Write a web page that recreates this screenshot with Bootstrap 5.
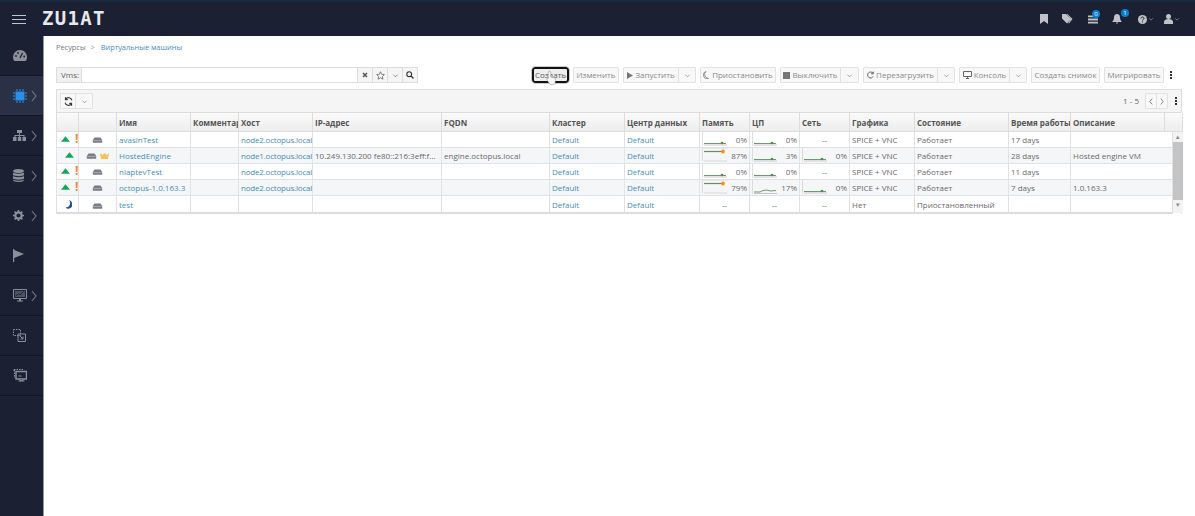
<!DOCTYPE html>
<html lang="ru">

<head>
    <meta charset="UTF-8">
    <meta name="viewport" content="width=device-width, initial-scale=1.0">
    <title>Виртуальные машины</title>
    <link href="https://cdn.jsdelivr.net/npm/bootstrap@5.3.5/dist/css/bootstrap.min.css" rel="stylesheet">
    <style>
        html, body { height: 516px; overflow: hidden; }
        body { font-family: "Open Sans", "Liberation Sans", sans-serif; font-size: 8px; color: #6a6a6a; background: #fff; }
        a { color: #3f8fc0; text-decoration: none; }
        .top-bar { height: 36px; background: #1b2033; border-top: 2px solid #17283f; padding: 0 15px 0 12px; }
        .burger { width: 14px; height: 9px; border-top: 1px solid #c3c5cb; border-bottom: 1px solid #c3c5cb; position: relative; }
        .burger::after { content: ""; display: block; height: 1px; margin-top: 3px; background: #c3c5cb; }
        .brand-name { font-family: "DejaVu Sans Mono", monospace; font-weight: 700; font-size: 19px; line-height: 20px; letter-spacing: 1.3px; color: #e8e9ec; margin: 0 0 2px 16px; }
        .top-ic { color: #c0c2c8; position: relative; display: flex; align-items: center; gap: 1px; }
        .gap-14 { margin-right: 14px; }
        .gap-15 { margin-right: 15px; }
        .gap-16 { margin-right: 16px; }
        .gap-10 { margin-right: 10px; }
        .top-badge { position: absolute; top: -5px; right: -7px; width: 8px; height: 8px; border-radius: 50%; background: #0a7fd0; color: #fff; font-size: 6px; line-height: 8px; text-align: center; }
        .top-badge.task-badge { right: -2px; }
        .caret-mini { width: 6px; height: 6px; color: #8d909a; }
        .shell { height: 480px; }
        .side-rail { width: 44px; flex: none; background: #1b2033; border-right: 1px solid #8f95a3; }
        .rail-item { height: 40px; border-bottom: 1px solid #12162a; color: #8d909a; padding-left: 13px; }
        .rail-item.is-active { background: #2a3146; color: #2a8fe6; }
        .rail-chev { color: #70747f; margin-left: auto; margin-right: 6px; }
        .main-area { padding: 0 13px 0 12px; min-width: 0; }
        .crumbs { height: 31px; padding-top: 6px; line-height: 11px; color: #777; font-size: 7.4px; }
        .crumbs .sep { margin: 0 4px 0 3px; color: #999; }
        .action-row { height: 16px; margin-bottom: 6px; }
        .search-wrap { width: 362px; height: 16px; border: 1px solid #ddd; }
        .search-label { width: 25px; background: #f1f1f1; border-right: 1px solid #ddd; color: #666; padding-left: 4px; line-height: 14px; }
        .search-btn { width: 15px; background: #f5f5f5; border-left: 1px solid #ddd; color: #555; }
        .tb-btn { --bs-btn-padding-x: 2px; --bs-btn-padding-y: 0; --bs-btn-font-size: 8px; --bs-btn-line-height: 14px; --bs-btn-color: #8b8b8b; --bs-btn-bg: #f8f8f8; --bs-btn-border-color: #e2e2e2; --bs-btn-border-radius: 1px; height: 16px; white-space: nowrap; display: inline-flex; align-items: center; gap: 2px; justify-content: center; }
        .tb-btn svg { flex: none; }
        .tb-caret { width: 18px; padding: 0; color: #999; }
        .tb-create { --bs-btn-color: #555; --bs-btn-bg: #eee; --bs-btn-border-color: #111; border-width: 2px; border-radius: 3px; width: 37px; padding: 0; outline: 1px solid #ccc; }
        .kebab { width: 2px; height: 8px; color: #333; flex: none; }
        .hand-cursor { position: absolute; left: 14px; top: 3px; width: 10px; height: 15px; }
        .action-btns { position: relative; }
        .grid-box { border: 1px solid #ddd; border-bottom: 0; }
        .grid-tools { height: 23px; background: #f5f5f5; border-bottom: 1px solid #ddd; padding: 0 3px; }
        .grid-tools .tb-btn { --bs-btn-color: #555; height: 16px; }
        .pager-num { color: #666; margin-right: 6px; }
        .vm-table { table-layout: fixed; width: 1126px; border-collapse: collapse; margin: 0 0 0 -1px; font-size: 8px; color: #6a6a6a; }
        .vm-table th { height: 18px; padding: 3px 2px 0; font-weight: 700; color: #555; background: linear-gradient(#fafafa, #ededed); border: 1px solid #ddd; border-top: 0; white-space: nowrap; overflow: hidden; vertical-align: middle; }
        .vm-table td { height: 16px; padding: 0 2px; line-height: 13px; background: #fff; border: 1px solid #e0e0e0; white-space: nowrap; overflow: hidden; text-overflow: ellipsis; vertical-align: middle; color: #6a6a6a; }
        .vm-table tbody tr:nth-child(even) td { background: #f5f6f7; border-color: #dfe4ea; }
        .vm-table tbody tr:last-child td { height: 18px; padding-top: 1px; border-bottom: 2px solid #ddd; }
        .vm-table .scroll-cell { padding: 0; background: #f3f3f3; border: 0; vertical-align: top; }
        .vm-table .state-cell { padding: 0 0 0 4px; }
        .vm-table .host-cell { padding: 0 0 0 2px; text-overflow: clip; letter-spacing: -.2px; }
        .scroll-arrow { height: 10px; color: #8a8a8a; font-size: 6px; line-height: 10px; text-align: center; }
        .scroll-thumb { height: 58px; background: #c4c4c4; }
        .usage-cell { display: flex; align-items: center; justify-content: space-between; }
        .st-up { color: #1aa45a; flex: none; }
        .st-warn { color: #f0862a; font-weight: 700; font-size: 12px; line-height: 12px; }
        .ic-muted { color: #777; }
        .cell-center { text-align: center; }
        .spark-w { width: 27px; height: 14px; flex: none; }
        .state-gap { gap: 5px; }
    </style>
</head>

<body>
    <svg width="0" height="0" class="d-block">
        <symbol id="vm-ic" viewBox="0 0 12 7"><path d="M2.5 0.5h7L11.5 3.5v2.5a.6.6 0 0 1-.6.6H1.1a.6.6 0 0 1-.6-.6V3.5z" fill="#7b7b86"/><path d="M1 4h10" stroke="#c9c9cf" stroke-width=".7"/></symbol>
        <symbol id="up-ic" viewBox="0 0 10 6"><path d="M5 0L10 6H0z" fill="currentColor"/></symbol>
        <symbol id="spark-low" viewBox="0 0 27 14"><path d="M.5 0V13.5" stroke="#ddd" fill="none"/><path d="M2 11.5H24" stroke="#6d9a6d" fill="none"/><path d="M2 13H25" stroke="#c8c8c8" fill="none"/><circle cx="20" cy="11" r="1.3" fill="#4f8a55"/></symbol>
        <symbol id="spark-high" viewBox="0 0 27 14"><path d="M.5 0H26M.5 0V13.5" stroke="#ddd" fill="none"/><path d="M2 3.5H20" stroke="#6d8a68" stroke-width="1.2" fill="none"/><circle cx="21" cy="3.5" r="1.9" fill="#f7901e"/><path d="M2 13H25" stroke="#d5d5d5" fill="none"/></symbol>
        <symbol id="spark-mid" viewBox="0 0 27 14"><path d="M.5 0V13.5" stroke="#ddd" fill="none"/><path d="M2 12H8L11 10.5 15 10 18 11 24 10.5" stroke="#6d9a6d" fill="none"/><path d="M2 13.5H25" stroke="#c8c8c8" fill="none"/></symbol>
        <symbol id="chev-d" viewBox="0 0 8 8"><path d="M1.5 3L4 5.5 6.5 3" fill="none" stroke="currentColor"/></symbol>
        <symbol id="chev-r" viewBox="0 0 6 12"><path d="M1 1L5 6 1 11" fill="none" stroke="currentColor" stroke-width="1.2"/></symbol>
        <symbol id="chev-l" viewBox="0 0 6 12"><path d="M5 1L1 6 5 11" fill="none" stroke="currentColor" stroke-width="1.2"/></symbol>
        <symbol id="kebab-ic" viewBox="0 0 2 8"><path d="M0 0h2v2H0zM0 3h2v2H0zM0 6h2v2H0z" fill="currentColor"/></symbol>
    </svg>

    <nav class="top-bar d-flex align-items-center">
        <div class="burger"></div>
        <span class="brand-name">ZU1AT</span>
        <div class="ms-auto d-flex align-items-center">
            <span class="top-ic gap-14"><svg width="8" height="10" viewBox="0 0 8 10"><path d="M0 0h8v10L4 7 0 10z" fill="currentColor"/></svg></span>
            <span class="top-ic gap-15"><svg width="11" height="10" viewBox="0 0 11 10"><path d="M0 0h4l5 5-4 4.500-5-5zM5.500 0l5 5-3.500 4.500-.7-.6L9 5 4.500 0z" fill="currentColor"/></svg></span>
            <span class="top-ic gap-14"><svg width="10" height="9" viewBox="0 0 11 9"><path d="M0 0h11v2H0zM0 3.500h11v2H0zM0 7h11v2H0z" fill="currentColor"/></svg><span class="top-badge task-badge">0</span></span>
            <span class="top-ic gap-16"><svg width="10" height="10" viewBox="0 0 10 10"><path d="M5 0c2 0 3 1.500 3 3.500S9 7 10 8H0c1-1 2-2.500 2-4.500S3 0 5 0zM3.800 8.600h2.400L5 10z" fill="currentColor"/></svg><span class="top-badge">1</span></span>
            <span class="top-ic gap-10"><svg width="9" height="9" viewBox="0 0 9 9"><circle cx="4.500" cy="4.500" r="4.500" fill="currentColor"/><path d="M3 3.500c0-2 3-2 3 0 0 1-1.500 1-1.500 2" fill="none" stroke="#1b2033"/><path d="M4 6.500h1v1H4z" fill="#1b2033"/></svg><svg class="caret-mini"><use href="#chev-d"/></svg></span>
            <span class="top-ic"><svg width="9" height="10" viewBox="0 0 9 10"><circle cx="4.500" cy="2.500" r="2.500" fill="currentColor"/><path d="M0 10V8c0-2 2-3 4.500-3S9 6 9 8v2z" fill="currentColor"/></svg><svg class="caret-mini"><use href="#chev-d"/></svg></span>
        </div>
    </nav>

    <div class="shell d-flex">
        <aside class="side-rail">
            <div class="rail-item d-flex align-items-center"><svg width="14" height="11" viewBox="0 0 14 11"><path d="M7 0a7 7 0 0 1 7 7c0 1.500-.5 3-1.300 4H1.300C.5 10 0 8.500 0 7a7 7 0 0 1 7-7z" fill="currentColor"/><path d="M7 8L9.500 3" stroke="#1b2033" stroke-width="1.200"/><circle cx="3" cy="6" r=".9" fill="#1b2033"/><circle cx="5" cy="3" r=".9" fill="#1b2033"/><circle cx="11.200" cy="6.500" r=".9" fill="#1b2033"/></svg></div>
            <div class="rail-item is-active d-flex align-items-center"><svg width="14" height="14" viewBox="0 0 14 14"><rect x="2.500" y="2.500" width="9" height="9" fill="currentColor"/><path d="M4 0v2M7 0v2M10 0v2M4 12v2M7 12v2M10 12v2M0 4h2M0 7h2M0 10h2M12 4h2M12 7h2M12 10h2" stroke="currentColor"/></svg><svg class="rail-chev" width="6" height="12"><use href="#chev-r"/></svg></div>
            <div class="rail-item d-flex align-items-center"><svg width="13" height="11" viewBox="0 0 13 11"><path d="M4 0h5v3H4zM0 7h3.500v4H0zM4.800 7h3.400v4H4.800zM9.500 7H13v4H9.500zM6 3h1v2h4.500v2h-1V6H7v1H6V6H2.500v1h-1V5H6z" fill="currentColor"/></svg><svg class="rail-chev" width="6" height="12"><use href="#chev-r"/></svg></div>
            <div class="rail-item d-flex align-items-center"><svg width="11" height="13" viewBox="0 0 11 13"><ellipse cx="5.500" cy="2" rx="5.500" ry="2" fill="currentColor"/><path d="M0 3.500c1 1.500 10 1.500 11 0V6c-1 1.500-10 1.500-11 0zM0 7c1 1.500 10 1.500 11 0v2.500c-1 1.500-10 1.500-11 0zM0 10.500c1 1.500 10 1.500 11 0V11c0 1.100-2.500 2-5.500 2S0 12.100 0 11z" fill="currentColor"/></svg><svg class="rail-chev" width="6" height="12"><use href="#chev-r"/></svg></div>
            <div class="rail-item d-flex align-items-center"><svg width="11" height="11" viewBox="0 0 11 11"><circle cx="5.500" cy="5.500" r="3.200" fill="none" stroke="currentColor" stroke-width="2.200"/><path d="M5.500 0v11M0 5.500h11M1.600 1.600l7.800 7.800M9.400 1.600L1.600 9.400" stroke="currentColor" stroke-width="1.600" stroke-dasharray="1.800 7.400"/></svg><svg class="rail-chev" width="6" height="12"><use href="#chev-r"/></svg></div>
            <div class="rail-item d-flex align-items-center"><svg width="11" height="13" viewBox="0 0 11 13"><path d="M0 0h1.200v13H0zM1.200 1L11 5 1.200 9z" fill="currentColor"/></svg></div>
            <div class="rail-item d-flex align-items-center"><svg width="14" height="13" viewBox="0 0 14 13"><path d="M.5.500h13v9H.5z" fill="none" stroke="currentColor"/><path d="M2 2h10v6H2z" fill="currentColor" opacity=".45"/><path d="M3 7l2.500-2.500L7 6l3.500-3.500" fill="none" stroke="#1b2033"/><path d="M6 10h2v1.500h2v1H4v-1h2z" fill="currentColor"/></svg><svg class="rail-chev" width="6" height="12"><use href="#chev-r"/></svg></div>
            <div class="rail-item d-flex align-items-center"><svg width="13" height="13" viewBox="0 0 13 13"><path d="M.5.500h7v6h-7z" fill="none" stroke="currentColor" stroke-dasharray="1.500 1"/><path d="M5 5h7.500v7.500H5z" fill="none" stroke="currentColor"/><path d="M6.500 6.500L10 10M10 7.500V10H7.500" fill="none" stroke="currentColor"/></svg></div>
            <div class="rail-item d-flex align-items-center"><svg width="14" height="13" viewBox="0 0 14 13"><path d="M0 2V.5h11M1.500 1v8" fill="none" stroke="currentColor" stroke-dasharray="1.500 1"/><path d="M3 2.500h10.500v7.500H3z" fill="none" stroke="currentColor" stroke-width="1.400"/><path d="M5.500 7h3M7 10h3v1.500H7zM5.500 12h6" stroke="currentColor"/></svg></div>
        </aside>

        <main class="main-area flex-grow-1">
            <div class="crumbs">Ресурсы <span class="sep">&gt;</span> <a href="#">Виртуальные машины</a></div>

            <div class="action-row d-flex align-items-center">
                <div class="search-wrap d-flex">
                    <div class="search-label">Vms:</div>
                    <div class="flex-grow-1"></div>
                    <div class="search-btn d-flex align-items-center justify-content-center"><svg width="6" height="6" viewBox="0 0 6 6"><path d="M1 1l4 4M5 1L1 5" stroke="currentColor" stroke-width="1.500"/></svg></div>
                    <div class="search-btn d-flex align-items-center justify-content-center"><svg width="9" height="9" viewBox="0 0 10 10"><path d="M5 .8l1.300 2.800 3 .4-2.200 2.100.6 3L5 7.600 2.300 9.100l.6-3L.7 4l3-.4z" fill="none" stroke="currentColor" stroke-width=".8"/></svg></div>
                    <div class="search-btn d-flex align-items-center justify-content-center"><svg width="7" height="7" class="ic-muted"><use href="#chev-d"/></svg></div>
                    <div class="search-btn d-flex align-items-center justify-content-center"><svg width="8" height="8" viewBox="0 0 8 8"><circle cx="3.200" cy="3.200" r="2.400" fill="none" stroke="#333" stroke-width="1.100"/><path d="M5 5l2.500 2.500" stroke="#333" stroke-width="1.300"/></svg></div>
                </div>

                <div class="action-btns ms-auto d-flex align-items-center">
                    <button class="btn tb-btn tb-create">Создать</button>
                    <button class="btn tb-btn ms-1" style="width:46px">Изменить</button>
                    <div class="btn-group ms-1">
                        <button class="btn tb-btn" style="width:56px"><svg width="6" height="7" viewBox="0 0 6 7"><path d="M0 0l6 3.500L0 7z" fill="#777"/></svg>Запустить</button>
                        <button class="btn tb-btn tb-caret"><svg width="7" height="7"><use href="#chev-d"/></svg></button>
                    </div>
                    <button class="btn tb-btn ms-1" style="width:76px"><svg width="7" height="8" viewBox="0 0 7 8"><path d="M5.500 7.500A3.700 3.700 0 0 1 3 .5a4 4 0 0 0 2.500 7z" fill="none" stroke="#777" stroke-width=".8"/></svg>Приостановить</button>
                    <div class="btn-group ms-1">
                        <button class="btn tb-btn" style="width:61px"><svg width="7" height="7" viewBox="0 0 7 7"><path d="M0 0h7v7H0z" fill="#777"/></svg>Выключить</button>
                        <button class="btn tb-btn tb-caret" style="width:19px"><svg width="7" height="7"><use href="#chev-d"/></svg></button>
                    </div>
                    <div class="btn-group ms-1">
                        <button class="btn tb-btn" style="width:75px"><svg width="7" height="8" viewBox="0 0 7 8"><path d="M6 2.200A3 3 0 1 0 6.200 5.500M6.300 .6v2.200H4.100" fill="none" stroke="#666"/></svg>Перезагрузить</button>
                        <button class="btn tb-btn tb-caret"><svg width="7" height="7"><use href="#chev-d"/></svg></button>
                    </div>
                    <div class="btn-group ms-1">
                        <button class="btn tb-btn" style="width:51px"><svg width="9" height="8" viewBox="0 0 9 8"><path d="M.5.500h8v5h-8zM3 7.500h3M4.500 5.500v2" fill="none" stroke="#666"/></svg>Консоль</button>
                        <button class="btn tb-btn tb-caret"><svg width="7" height="7"><use href="#chev-d"/></svg></button>
                    </div>
                    <button class="btn tb-btn ms-1" style="width:69px">Создать снимок</button>
                    <button class="btn tb-btn ms-1" style="width:60px">Мигрировать</button>
                    <svg class="kebab" style="margin:0 10px 0 6px"><use href="#kebab-ic"/></svg>
                    <svg class="hand-cursor" viewBox="0 0 10 15"><path d="M3.500 1c.8 0 1.200.5 1.200 1.200V7l3.500.8c.8.2 1.300.7 1.300 1.500l-.5 4c-.1.8-.7 1.200-1.300 1.200H4L.8 9.500c-.6-.8.400-1.700 1.200-1l.3.300V2.200C2.300 1.500 2.800 1 3.500 1z" fill="#f6f6f6" stroke="#9a9a9a" stroke-width=".6"/></svg>
                </div>
            </div>

            <div class="grid-box">
                <div class="grid-tools d-flex align-items-center">
                    <div class="btn-group">
                        <button class="btn tb-btn" style="width:16px"><svg width="9" height="9" viewBox="0 0 8 8"><path d="M7 3A3 3 0 0 0 1.500 2M1 5a3 3 0 0 0 5.500 1M1.300.3v2h2M6.700 7.700v-2h-2" fill="none" stroke="#333"/></svg></button>
                        <button class="btn tb-btn tb-caret"><svg width="7" height="7"><use href="#chev-d"/></svg></button>
                    </div>
                    <span class="pager-num ms-auto">1 - 5</span>
                    <div class="btn-group">
                        <button class="btn tb-btn" style="width:12px"><svg width="4" height="7"><use href="#chev-l"/></svg></button>
                        <button class="btn tb-btn" style="width:12px"><svg width="4" height="7"><use href="#chev-r"/></svg></button>
                    </div>
                    <svg class="kebab" style="margin:0 1px 0 7px"><use href="#kebab-ic"/></svg>
                </div>

                <table class="table vm-table">
                    <colgroup>
                        <col style="width:22px"><col style="width:38px"><col style="width:74px"><col style="width:48px"><col style="width:74px"><col style="width:129px"><col style="width:108px"><col style="width:75px"><col style="width:75px"><col style="width:50px"><col style="width:50px"><col style="width:50px"><col style="width:65px"><col style="width:94px"><col style="width:62px"><col style="width:94px"><col style="width:8px"><col style="width:10px">
                    </colgroup>
                    <thead>
                        <tr>
                            <th></th><th></th><th>Имя</th><th>Комментарий</th><th>Хост</th><th>IP-адрес</th><th>FQDN</th><th>Кластер</th><th>Центр данных</th><th>Память</th><th>ЦП</th><th>Сеть</th><th>Графика</th><th>Состояние</th><th>Время работы</th><th>Описание</th><th colspan="2"></th>
                        </tr>
                    </thead>
                    <tbody>
                        <tr>
                            <td class="state-cell"><div class="d-flex align-items-center state-gap"><svg class="st-up" width="9" height="6"><use href="#up-ic"/></svg><span class="st-warn">!</span></div></td>
                            <td class="cell-center"><svg width="11" height="6"><use href="#vm-ic"/></svg></td>
                            <td><a href="#">avasinTest</a></td><td></td><td class="host-cell"><a href="#">node2.octopus.local</a></td><td></td><td></td>
                            <td><a href="#">Default</a></td><td><a href="#">Default</a></td>
                            <td><div class="usage-cell"><svg class="spark-w"><use href="#spark-low"/></svg>0%</div></td>
                            <td><div class="usage-cell"><svg class="spark-w"><use href="#spark-low"/></svg>0%</div></td>
                            <td class="cell-center">--</td>
                            <td>SPICE + VNC</td><td>Работает</td><td>17 days</td><td colspan="2"></td>
                            <td class="scroll-cell" rowspan="5"><div class="scroll-arrow">&#9650;</div><div class="scroll-thumb"></div><div class="scroll-arrow">&#9660;</div></td>
                        </tr>
                        <tr>
                            <td class="state-cell"><div class="d-flex align-items-center"><svg class="st-up ms-1" width="9" height="6"><use href="#up-ic"/></svg></div></td>
                            <td class="cell-center"><svg width="11" height="6"><use href="#vm-ic"/></svg> <svg width="9" height="6" viewBox="0 0 9 6"><path d="M0 0l2.500 2L4.500 0l2 2L9 0 8 6H1z" fill="#f4c35a"/></svg></td>
                            <td><a href="#">HostedEngine</a></td><td></td><td class="host-cell"><a href="#">node1.octopus.local</a></td><td>10.249.130.200 fe80::216:3eff:fe6...</td><td>engine.octopus.local</td>
                            <td><a href="#">Default</a></td><td><a href="#">Default</a></td>
                            <td><div class="usage-cell"><svg class="spark-w"><use href="#spark-high"/></svg>87%</div></td>
                            <td><div class="usage-cell"><svg class="spark-w"><use href="#spark-low"/></svg>3%</div></td>
                            <td><div class="usage-cell"><svg class="spark-w"><use href="#spark-low"/></svg>0%</div></td>
                            <td>SPICE + VNC</td><td>Работает</td><td>28 days</td><td colspan="2">Hosted engine VM</td>
                        </tr>
                        <tr>
                            <td class="state-cell"><div class="d-flex align-items-center state-gap"><svg class="st-up" width="9" height="6"><use href="#up-ic"/></svg><span class="st-warn">!</span></div></td>
                            <td class="cell-center"><svg width="11" height="6"><use href="#vm-ic"/></svg></td>
                            <td><a href="#">nlaptevTest</a></td><td></td><td class="host-cell"><a href="#">node2.octopus.local</a></td><td></td><td></td>
                            <td><a href="#">Default</a></td><td><a href="#">Default</a></td>
                            <td><div class="usage-cell"><svg class="spark-w"><use href="#spark-low"/></svg>0%</div></td>
                            <td><div class="usage-cell"><svg class="spark-w"><use href="#spark-low"/></svg>0%</div></td>
                            <td class="cell-center">--</td>
                            <td>SPICE + VNC</td><td>Работает</td><td>11 days</td><td colspan="2"></td>
                        </tr>
                        <tr>
                            <td class="state-cell"><div class="d-flex align-items-center state-gap"><svg class="st-up" width="9" height="6"><use href="#up-ic"/></svg><span class="st-warn">!</span></div></td>
                            <td class="cell-center"><svg width="11" height="6"><use href="#vm-ic"/></svg></td>
                            <td><a href="#">octopus-1.0.163.3</a></td><td></td><td class="host-cell"><a href="#">node2.octopus.local</a></td><td></td><td></td>
                            <td><a href="#">Default</a></td><td><a href="#">Default</a></td>
                            <td><div class="usage-cell"><svg class="spark-w"><use href="#spark-high"/></svg>79%</div></td>
                            <td><div class="usage-cell"><svg class="spark-w"><use href="#spark-mid"/></svg>17%</div></td>
                            <td><div class="usage-cell"><svg class="spark-w"><use href="#spark-low"/></svg>0%</div></td>
                            <td>SPICE + VNC</td><td>Работает</td><td>7 days</td><td colspan="2">1.0.163.3</td>
                        </tr>
                        <tr>
                            <td class="state-cell"><div class="d-flex align-items-center"><svg class="ms-1" width="7" height="9" viewBox="0 0 7 9"><path d="M4 0a4.500 4.500 0 0 1-3.500 7.500A4 4 0 0 0 5.500 8 4.500 4.500 0 0 0 4 0z" fill="#1c4fa8"/></svg></div></td>
                            <td class="cell-center"><svg width="11" height="6"><use href="#vm-ic"/></svg></td>
                            <td><a href="#">test</a></td><td></td><td></td><td></td><td></td>
                            <td><a href="#">Default</a></td><td><a href="#">Default</a></td>
                            <td class="cell-center">--</td><td class="cell-center">--</td><td class="cell-center">--</td>
                            <td>Нет</td><td>Приостановленный</td><td></td><td colspan="2"></td>
                        </tr>
                    </tbody>
                </table>
            </div>
        </main>
    </div>

    <script src="https://cdn.jsdelivr.net/npm/bootstrap@5.3.5/dist/js/bootstrap.bundle.min.js"></script>
</body>

</html>
